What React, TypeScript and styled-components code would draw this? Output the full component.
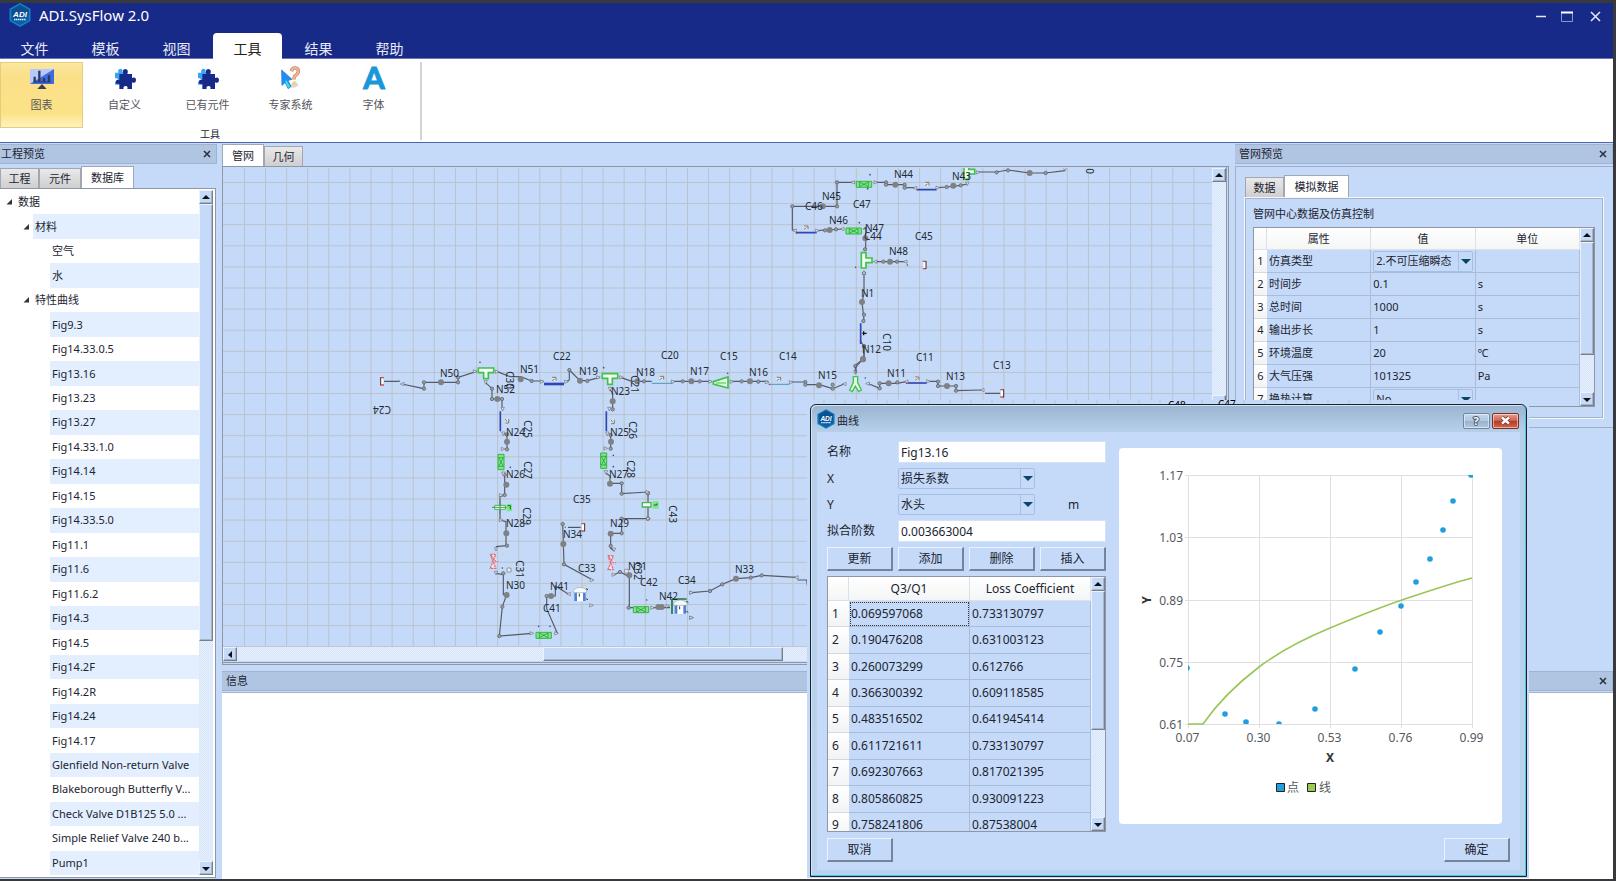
import React from "react";
import styled, { createGlobalStyle, css } from "styled-components";

const font = `"Noto Sans", "Noto Sans CJK SC", sans-serif`;
const c = {
  navy: "#182a87",
  pane: "#c5daf8",
  dock: "#b0c5e2",
  line: "#8f97a5",
  grid: "#a9bcd9",
  text: "#1c2430",
  dark: "#37393c",
};

const GlobalStyle = createGlobalStyle`
  * { box-sizing: border-box; }
  body { margin: 0; background: ${c.dark}; font-family: ${font}; font-size: 11px; line-height: 16px; color: ${c.text}; }
  button, input, select { font: inherit; color: inherit; margin: 0; padding: 0; border: 0; border-radius: 0; background: none; }
  ul, h1, h2, p { margin: 0; padding: 0; list-style: none; font-size: inherit; font-weight: normal; }
  svg { display: block; flex: none; }
`;

const Page = styled.div`
  position: relative;
  display: flex;
  flex-direction: column;
  min-height: 100vh;
  border: solid ${c.dark};
  border-width: 3px 3px 2px 0;
  background: ${c.pane};
`;

/* ---------- title bar and ribbon ---------- */
const Header = styled.header`
  background: ${c.navy};
  color: #fff;
`;
const TitleRow = styled.div`
  display: flex;
  align-items: center;
  height: 30px;
  padding: 0 11px 6px 9px;
  gap: 8px;
`;
const AppTitle = styled.h1`
  flex: 1;
  font-size: 15px;
  line-height: 24px;
`;
const WindowButtons = styled.div`
  display: flex;
  gap: 15px;
  padding-top: 2px;
`;
const MenuRow = styled.nav`
  display: flex;
  gap: 2px;
  height: 26px;
  border-bottom: 1px solid #6a76b4;
`;
const MenuTab = styled.button<{ $active?: boolean }>`
  width: 69px;
  height: 26px;
  padding-top: 5px;
  font-size: 14px;
  line-height: 20px;
  color: #e8ebf7;
  ${(p) => p.$active && css`background: #fff; color: #222; border-radius: 4px 4px 0 0;`}
`;
const Ribbon = styled.div`
  display: flex;
  height: 84px;
  background: #fff;
  border-bottom: 1px solid #5263ad;
`;
const RibbonGroup = styled.section`
  width: 422px;
  margin: 3px 0 2px;
  border-right: 2px solid #d3d3d6;
`;
const RibbonButtons = styled.div`
  display: flex;
`;
const RibbonButton = styled.button<{ $active?: boolean }>`
  display: flex;
  flex-direction: column;
  align-items: center;
  width: 83px;
  height: 66px;
  padding-top: 3px;
  gap: 7px;
  color: #55565a;
  border: 1px solid transparent;
  ${(p) => p.$active && css`
    background: linear-gradient(#fbe7a1, #fbe08a 20%, #fce286 78%, #fff2c0);
    border-color: #e6cd7c;
  `}
`;
const GroupCaption = styled.p`
  font-size: 10px;
  line-height: 12px;
  text-align: center;
`;

/* ---------- docks ---------- */
const Work = styled.main`
  flex: 1;
  display: flex;
  gap: 5px;
  padding-top: 1px;
`;
const LeftDock = styled.aside`
  display: flex;
  flex-direction: column;
  width: 217px;
`;
const Center = styled.div`
  flex: 1;
  min-width: 0;
  display: flex;
  flex-direction: column;
  gap: 6px;
`;
const Upper = styled.div`
  flex: 1;
  display: flex;
  gap: 6px;
  min-height: 0;
`;
const DockTitle = styled.div<{ $pad?: number }>`
  display: flex;
  align-items: center;
  justify-content: space-between;
  height: 20px;
  flex: none;
  padding: 0 5px 0 ${(p) => p.$pad ?? 1}px;
  background: ${c.dock};
  border: 1px solid #a0b4d2;
  border-left-width: 0;
`;
const TabRow = styled.div<{ $pad?: string }>`
  display: flex;
  align-items: flex-end;
  flex: none;
  padding: ${(p) => p.$pad ?? "0"};
`;
const Tab = styled.button<{ $active?: boolean; $w: number }>`
  width: ${(p) => p.$w}px;
  height: ${(p) => (p.$active ? 22 : 20)}px;
  background: ${(p) => (p.$active ? "#fff" : "linear-gradient(#e9e9ea, #dcdcdd 50%, #cfcfd1)")};
  border: 1px solid #a3a8b0;
  border-bottom: 0;
`;
const TreeFrame = styled.div`
  flex: 1;
  display: flex;
  margin: 0 1px 1px 0;
  padding: 1px 2px 2px 0;
  background: #fff;
  border: 1px solid ${c.line};
  border-left: 0;
`;
const Tree = styled.ul`
  flex: 1;
  display: flex;
  flex-direction: column;
  min-width: 0;
`;
const TreeRow = styled.li`
  flex: 1;
  display: flex;
`;
const Twisty = styled.span<{ $level: number }>`
  display: flex;
  flex: none;
  align-items: center;
  justify-content: flex-end;
  width: ${(p) => [16, 33, 50][p.$level]}px;
  padding-right: 4px;
`;
const TreeLabel = styled.span<{ $alt: boolean }>`
  flex: 1;
  display: flex;
  align-items: center;
  padding-left: 2px;
  white-space: nowrap;
  overflow: hidden;
  background: ${(p) => (p.$alt ? "#e3effe" : "#fff")};
`;

/* ---------- scroll bars ---------- */
const Bar = styled.div<{ $horizontal?: boolean }>`
  display: flex;
  flex: none;
  flex-direction: ${(p) => (p.$horizontal ? "row" : "column")};
  ${(p) => (p.$horizontal ? "height" : "width")}: 14px;
  background: repeating-conic-gradient(#d6e5fa 0 25%, #e6effc 0 50%) 0 0 / 2px 2px;
`;
const bevel = css`
  background: ${c.pane};
  border: 1px solid;
  border-color: #e9f2fe #777f8c #777f8c #e9f2fe;
  box-shadow: inset -1px -1px #a9b4c6;
`;
const BarButton = styled.button`
  display: grid;
  place-items: center;
  width: 14px;
  height: 14px;
  flex: none;
  ${bevel}
`;
const BarSpace = styled.span<{ $grow: number }>`
  flex: ${(p) => p.$grow} 1 0;
`;
const Thumb = styled(BarSpace)`
  ${bevel}
`;
const arrows = { up: "M0 5L4 1L8 5Z", down: "M0 2L8 2L4 6Z", left: "M6 0L2 4L6 7Z", right: "M2 0L6 4L2 7Z" };
function Scrollbar({ before = 0, size, after, horizontal }: { before?: number; size: number; after: number; horizontal?: boolean }) {
  const dirs: (keyof typeof arrows)[] = horizontal ? ["left", "right"] : ["up", "down"];
  const button = (d: keyof typeof arrows) => (
    <BarButton aria-label={d}>
      <svg width="8" height="7" viewBox="0 0 8 7"><path d={arrows[d]} fill="#111" /></svg>
    </BarButton>
  );
  return (
    <Bar $horizontal={horizontal}>
      {button(dirs[0])}
      <BarSpace $grow={before} />
      <Thumb $grow={size} />
      <BarSpace $grow={after} />
      {button(dirs[1])}
    </Bar>
  );
}

/* ---------- network canvas ---------- */
const NetworkPane = styled.section`
  flex: 1;
  min-width: 0;
  display: flex;
  flex-direction: column;
`;
const CanvasFrame = styled.div`
  flex: 1;
  display: flex;
  min-height: 0;
  border: 1px solid ${c.line};
  border-right: 3px double ${c.line};
  border-bottom: 3px double ${c.line};
  padding: 1px 0 1px 0;
`;
const CanvasColumn = styled.div`
  flex: 1;
  min-width: 0;
  display: flex;
  flex-direction: column;
`;
const Scene = styled.div`
  flex: 1 1 0;
  min-height: 0;
  overflow: hidden;
`;
const Drawing = styled.svg`
  font-family: ${font};
  font-size: 10px;
  fill: #222a36;
`;

/* ---------- right dock and info ---------- */
const RightDock = styled.aside`
  width: 378px;
`;
const PreviewFrame = styled.div`
  height: 262px;
  margin-top: 2px;
  padding: 8px 9px 8px 8px;
  border: 1px solid #a0b0c8;
  border-width: 1px 0 1px 1px;
`;
const TabPanel = styled.div`
  height: 222px;
  padding: 8px 8px 10px 8px;
  border: 1px solid #f4f8fe;
  outline: 1px solid #a7b3c6;
  outline-offset: -2px;
`;
const PanelCaption = styled.h2`
  padding-bottom: 5px;
`;
const InfoDock = styled.section`
  display: flex;
  flex-direction: column;
  height: 208px;
`;
const InfoBody = styled.div`
  flex: 1;
  margin-top: 1px;
  background: #fff;
  border-top: 1px solid #a7b3c6;
`;

/* ---------- tables ---------- */
const TableBox = styled.div<{ $h: number }>`
  display: flex;
  height: ${(p) => p.$h}px;
  overflow: hidden;
  border: 1px solid ${c.line};
`;
const TableClip = styled.div`
  flex: 1;
  overflow: hidden;
`;
const Table = styled.table`
  width: 100%;
  table-layout: fixed;
  border-collapse: separate;
  border-spacing: 0;
  td, th { padding: 0; font-weight: normal; line-height: 16px; }
  thead th { height: 22px; text-align: center; background: linear-gradient(#fff, #f4f5f6); border: solid #dde0e5; border-width: 0 1px 1px 0; }
  tbody tr { height: 23px; }
  tbody th { background: linear-gradient(#fff, #f2f3f5); border-bottom: 1px solid #d5d8dd; }
  td { border: solid ${c.grid}; border-width: 0 1px 1px 0; padding-left: 2px; }
`;
const CurveTable = styled(Table)`
  height: 262px;
  font-size: 12px;
  thead th { height: 24px; }
  tbody th { text-align: left; padding-left: 4px; }
  tbody tr:first-child td:nth-child(2) { outline: 1px dotted #333; outline-offset: -2px; }
`;
const SelectWrap = styled.span<{ $w: number; $h: number }>`
  position: relative;
  display: block;
  width: ${(p) => p.$w}px;
  height: ${(p) => p.$h}px;
`;
const Select = styled.select`
  appearance: none;
  width: 100%;
  height: 100%;
  padding-left: 2px;
  border: 1px solid #a5c0e6;
  border-radius: 2px;
  background: ${c.pane};
`;
const SelectArrow = styled.span`
  position: absolute;
  inset: 1px 1px 1px auto;
  width: 14px;
  display: grid;
  place-items: center;
  border-left: 1px solid #a5c0e6;
  pointer-events: none;
`;
function DropDown({ id, label, value, w, h }: { id?: string; label?: string; value: string; w: number; h: number }) {
  return (
    <SelectWrap $w={w} $h={h}>
      <Select id={id} aria-label={label}><option>{value}</option></Select>
      <SelectArrow><svg width="10" height="5"><path d="M0 0H10L5 5Z" fill="#0b4468" /></svg></SelectArrow>
    </SelectWrap>
  );
}

/* ---------- dialog ---------- */
const DialogHalo = styled.div`
  position: absolute;
  left: 807px;
  top: 397px;
  width: 722px;
  padding: 4px 2px 1px 3px;
  background: ${c.pane};
`;
const HaloTop = styled.svg`
  position: absolute;
  left: 0;
  top: 0;
  font-family: ${font};
  font-size: 10px;
`;
const Dialog = styled.section`
  border: 1px solid #16242e;
  border-radius: 6px 6px 0 0;
  padding: 0 6px 6px;
  background: linear-gradient(#9ab4d1, #b6cfe9 26px, #b9d2ee);
  box-shadow: inset -1px -1px #53c3dc, inset 1px 1px #d3e4f5;
  font-size: 12px;
`;
const DialogTitle = styled.header`
  display: flex;
  align-items: center;
  gap: 2px;
  height: 27px;
  padding-right: 1px;
  font-size: 11px;
  h2 { flex: 1; padding-top: 5px; }
`;
const CaptionButton = styled.button<{ $close?: boolean }>`
  display: grid;
  place-items: center;
  width: 27px;
  height: 16px;
  margin-top: 4px;
  border: 1px solid ${(p) => (p.$close ? "#7b2d2a" : "#6e86a3")};
  border-radius: 2px;
  box-shadow: inset 0 0 0 1px rgba(255, 255, 255, 0.5);
  background: ${(p) => (p.$close ? "linear-gradient(#e3a092, #d0604c 48%, #bb3820 52%, #cf6a50)" : "linear-gradient(#c4d6ea, #b2c8e0 48%, #98b3d0 52%, #b0c8e2)")};
`;
const DialogBody = styled.div`
  background: ${c.pane};
  padding: 9px 10px 8px;
`;
const Columns = styled.div`
  display: flex;
  gap: 13px;
`;
const Form = styled.div`
  width: 279px;
  display: flex;
  flex-direction: column;
  gap: 5px;
`;
const Field = styled.div`
  display: flex;
  align-items: center;
  label { width: 71px; }
`;
const TextInput = styled.input`
  width: 208px;
  height: 22px;
  padding-left: 2px;
  background: #fff;
  border: 1px solid #d5e2f4;
`;
const Unit = styled.span`
  padding-left: 33px;
`;
const ButtonRow = styled.div`
  display: flex;
  justify-content: space-between;
`;
const PushButton = styled.button`
  width: 66px;
  height: 24px;
  border: solid;
  border-width: 1px 2px 2px 1px;
  border-color: #e9f2fe #75849b #75849b #e9f2fe;
  background: ${c.pane};
`;
const ChartCard = styled.div`
  margin-top: 7px;
  width: 383px;
  height: 376px;
  background: #fff;
  border-radius: 4px;
`;
const ChartSvg = styled.svg`
  font-family: ${font};
  font-size: 12px;
  fill: #55585c;
`;
const Footer = styled(ButtonRow)`
  padding-top: 6px;
`;

/* ---------- icons ---------- */
function Logo({ w, h }: { w: number; h: number }) {
  return (
    <svg width={w} height={h} viewBox="0 0 22 24">
      <path d="M11 .8L20.800 6.200V17.600L11 23.200L1.200 17.600V6.200Z" fill="#0a5fa8" stroke="#1283c8" strokeWidth="1.400" />
      <path d="M11 2L19.500 6.800V12L3 17V6.800Z" fill="#0d4f8e" />
      <text x="11" y="14" fontSize="8" fontWeight="700" fontStyle="italic" textAnchor="middle" fill="#fff" fontFamily="Liberation Sans">ADI</text>
      <path d="M5 16.500H17" stroke="#dff1ff" strokeWidth="1.400" strokeDasharray="1.400 .5" />
    </svg>
  );
}
const BoardIcon = () => (
  <svg width="24" height="24" viewBox="0 0 72 72">
    <path d="M0 9H72V54H0Z" fill="#b8c8fa" />
    <path d="M72 9V54H0Z" fill="#3f6be2" />
    <path d="M14 48V32M28 48V14M42 48V36M57 48V28" stroke="#2d3c5e" strokeWidth="7" />
    <path d="M10 48H62" stroke="#2d3c5e" strokeWidth="3" />
    <path d="M36 54L50 69H22Z" fill="#3a4152" />
  </svg>
);
const PuzzleIcon = () => (
  <svg width="24" height="24" viewBox="-3 -8 72 72">
    <path d="M3 12h10q-3-10 6-12q9 1 6 10h8v38h-30v-9q9 2 10-5q-1-7-10-5z" fill="#3da3f5" />
    <path d="M16 16h12q-5-14 6-15q11 1 6 15h14v12q12-5 12 7q-1 11-12 6v20h-14q3-8-5-9q-9 1-6 9h-13v-16q-10 4-11-5q1-9 11-6z" fill="#182a87" />
  </svg>
);
const HelpIcon = () => (
  <svg width="24" height="24" viewBox="-6 -2 72 74">
    <path d="M20 62q20 8 34-4l-10-14z" fill="#d9d9de" />
    <path d="M31 14Q34 3 44 4Q55 6 52 17Q50 24 42 29Q39 32 39 40" fill="none" stroke="#c98a70" strokeWidth="11" />
    <path d="M31 14Q34 3 44 4Q55 6 52 17Q50 24 42 29Q39 32 39 40" fill="none" stroke="#f3b597" strokeWidth="6" />
    <circle cx="39" cy="52" r="6" fill="#efd56a" />
    <path d="M1 10L33 39L21 43L30 61L21 68L12 49L2 58Z" fill="#1f8ef5" stroke="#2a6db8" strokeWidth="2" />
    <path d="M16 42L27 62L21 66L12 46Z" fill="#35e3f5" />
  </svg>
);
const FontIcon = () => (
  <svg width="24" height="24" viewBox="0 0 24 24" overflow="visible">
    <text x="12" y="23" fontSize="31" textAnchor="middle" fontFamily="Lato" fontWeight="700" fill="#1a97d8" stroke="#1a97d8" strokeWidth="1" strokeLinejoin="round">A</text>
  </svg>
);
const CloseGlyph = () => (
  <svg width="8" height="8"><path d="M1 1L7 7M7 1L1 7" stroke="#2b3340" strokeWidth="1.600" /></svg>
);

/* ---------- data ---------- */
const treeItems: [number, string][] = [
  [0, "数据"], [1, "材料"], [2, "空气"], [2, "水"], [1, "特性曲线"],
  ...["Fig9.3", "Fig14.33.0.5", "Fig13.16", "Fig13.23", "Fig13.27", "Fig14.33.1.0", "Fig14.14", "Fig14.15", "Fig14.33.5.0",
    "Fig11.1", "Fig11.6", "Fig11.6.2", "Fig14.3", "Fig14.5", "Fig14.2F", "Fig14.2R", "Fig14.24", "Fig14.17",
    "Glenfield Non-return Valve", "Blakeborough Butterfly V...", "Check Valve D1B125 5.0 ...", "Simple Relief Valve 240 b...", "Pump1",
  ].map((t) => [2, t] as [number, string]),
];
const properties = [
  ["仿真类型", "2.不可压缩瞬态", ""], ["时间步", "0.1", "s"], ["总时间", "1000", "s"], ["输出步长", "1", "s"],
  ["环境温度", "20", "℃"], ["大气压强", "101325", "Pa"], ["换热计算", "No", ""],
];
const curve = [
  ["0.069597068", "0.733130797"], ["0.190476208", "0.631003123"], ["0.260073299", "0.612766"],
  ["0.366300392", "0.609118585"], ["0.483516502", "0.641945414"], ["0.611721611", "0.733130797"],
  ["0.692307663", "0.817021395"], ["0.805860825", "0.930091223"], ["0.758241806", "0.87538004"],
];

const labels: [string, number, number][] = [
  ["N50", 440, 377], ["C22", 553, 360], ["N51", 520, 373], ["N19", 579, 375], ["C20", 661, 359], ["N18", 636, 376],
  ["N52", 496, 393], ["N23", 611, 395], ["N24", 506, 436], ["N25", 610, 436], ["N26", 506, 478], ["N27", 609, 478],
  ["N28", 506, 527], ["N29", 610, 527], ["N34", 563, 538], ["C35", 573, 503], ["C33", 578, 572], ["N41", 550, 590],
  ["C41", 543, 612], ["N30", 506, 589], ["N31", 628, 570], ["C42", 640, 586], ["N42", 659, 600], ["C34", 678, 584],
  ["C15", 720, 360], ["C14", 779, 360], ["N17", 690, 375], ["N16", 749, 376], ["N15", 818, 379], ["N12", 862, 353],
  ["C11", 916, 361], ["N11", 887, 377], ["N13", 946, 380], ["C13", 993, 369], ["N33", 735, 573],
  ["N44", 894, 178], ["N43", 952, 180], ["N45", 822, 200], ["C46", 805, 210], ["C47", 853, 208], ["N46", 829, 224],
  ["N47", 865, 232], ["C44", 864, 240], ["C45", 915, 240], ["N48", 889, 255], ["N1", 861, 297],
];
const turned: [string, number, number, number][] = [
  ["C30", 510, 380, 90], ["C21", 635, 384, 90], ["C25", 528, 429, 90], ["C26", 633, 430, 90], ["C27", 528, 470, 90],
  ["C28", 631, 469, 90], ["C29", 527, 516, 90], ["C43", 673, 514, 90], ["C31", 520, 569, 90], ["C32", 638, 571, 90],
  ["C10", 887, 342, 90], ["0", 1090, 171, 90], ["C24", 382, 410, 180],
];

/* Parts of the network are drawn in groups whose unit is a third of a pixel. */
type Pts = number[][];
const Nodes = ({ at, r = 9 }: { at: Pts; r?: number }) => <>{at.map(([x, y], i) => <circle key={i} cx={x} cy={y} r={r} fill="#808184" />)}</>;
const Joints = ({ at }: { at: Pts }) => (
  <>{at.map(([x, y], i) => <circle key={i} cx={x} cy={y} r="5" fill="#9a9ea6" stroke="#63676f" strokeWidth="2.500" />)}</>
);
const Ports = ({ at }: { at: Pts }) => (
  <>{at.map(([x, y, a = 0], i) => <path key={i} d="M-6 -5L5 0L-6 5Z" transform={`translate(${x} ${y}) rotate(${a})`} fill="#dbe6f7" stroke="#6d7178" strokeWidth="2" />)}</>
);
const Wires = ({ d }: { d: string }) => <path d={d} fill="none" stroke="#555b66" strokeWidth="3.500" />;
const Pipes = ({ d, color = "#2f46b5", w = 5 }: { d: string; color?: string; w?: number }) => <path d={d} fill="none" stroke={color} strokeWidth={w} />;
const Valve = ({ x, y, turn = 0 }: { x: number; y: number; turn?: number }) => (
  <g transform={`translate(${x} ${y}) rotate(${turn})`}>
    <path d="M-23 -9H23V9H-23Z" fill="#7fe58a" stroke="#31b93e" strokeWidth="3" />
    <path d="M-13 -7L13 7V-7L-13 7Z" fill="none" stroke="#1e8b2a" strokeWidth="2" />
  </g>
);
const Tee = ({ x, y, turn = 0 }: { x: number; y: number; turn?: number }) => (
  <path transform={`translate(${x} ${y}) rotate(${turn})`} d="M-23 -14H23V0H7V18H-7V0H-23Z" fill="#f6fff4" stroke="#3fc14a" strokeWidth="5" />
);
const Bracket = ({ x, y, flip }: { x: number; y: number; flip?: boolean }) => (
  <g transform={`translate(${x} ${y}) scale(${flip ? -1 : 1} 1)`}>
    <path d="M-4 -11H4V11H-4Z" fill="#fff" /><path d="M-6 -11H4M-6 11H4" stroke="#d8503c" strokeWidth="4" /><path d="M4 -12V12" stroke="#442a2a" strokeWidth="3" />
  </g>
);
const Mark = ({ x, y, turn = 0 }: { x: number; y: number; turn?: number }) => (
  <g transform={`translate(${x} ${y}) rotate(${turn})`}><path d="M-7 -6H7V6H-7Z" fill="#eceae6" /><path d="M-6 -5H6V5M-6 5L2 0" stroke="#6a625c" strokeWidth="2.500" fill="none" /></g>
);
const RedValve = ({ x, y }: { x: number; y: number }) => (
  <g transform={`translate(${x} ${y})`}><path d="M-8 -21H8L-8 21H8L-8 -21L8 0H16" fill="#fbeaf0" stroke="#e0717a" strokeWidth="4" strokeDasharray="7 2" /></g>
);
const Tank = ({ x, y }: { x: number; y: number }) => (
  <g transform={`translate(${x} ${y})`}>
    <path d="M-17 -8H17V19H-17Z" fill="#4f80d6" /><path d="M-9 -8H9V20H-9Z" fill="#fff" /><path d="M-20 -14Q0 -30 20 -14V-6H-20Z" fill="#f4f7fb" stroke="#9aa7b8" strokeWidth="2" />
    <path d="M-2 -3V6M18 -18L24 -15M18 12L24 15" stroke="#333" strokeWidth="3" />
  </g>
);
const Specks = ({ at, color }: { at: Pts; color: string }) => <>{at.map(([x, y], i) => <circle key={i} cx={x} cy={y} r="2.500" fill={color} />)}</>;

function Network() {
  const rows = Array.from({ length: 38 }, (_, i) => 182.5 + i * 21.1);
  const cols = Array.from({ length: 62 }, (_, i) => 244.4 + i * 21.1);
  const third = 1 / 3;
  return (
    <Drawing width="1300" height="800" viewBox="223 168 1300 800" role="img" aria-label="管网">
      <path d={cols.map((x) => `M${x} 167V968`).join("") + rows.map((y) => `M223 ${y}H1523`).join("")} stroke="#bac2cd" strokeWidth="1" />
      <g transform={`translate(370 340) scale(${third})`}>
        <Wires d="M42 124H88M96 132L162 146V127H264V112L320 94M382 95L420 110H452L485 123H520M588 125L598 120V90L630 122H652L690 112M752 112L785 124H845" />
        <Wires d="M347 128L366 146V177H396V208M402 280L411 290V325M404 408V465L390 470V540L408 545V617L378 620M378 700L400 704V764H410L397 800L388 888L486 880M562 880L530 806V768H556V738L595 762" />
        <Wires d="M720 148L728 160V208M718 282L722 290V326M708 400L720 408V430H755V461L834 456V536H755V580H722V625L732 632M732 704L750 696L770 706H778V803H790M845 803H900M578 552L582 673L668 720" />
        <Pipes d="M522 132H582" w={8} /><Pipes d="M391 214V274M709 214V274" /><Pipes d="M845 130H908" color="#4a9bb5" w={3} />
        <Joints at={[[162, 146], [162, 127], [264, 127], [264, 112], [485, 123], [598, 90], [652, 123], [822, 124], [366, 146], [366, 177], [396, 177], [411, 328], [404, 404], [404, 465], [411, 617], [400, 700], [397, 800], [388, 888], [530, 768], [728, 208], [722, 326], [755, 430], [755, 461], [834, 460], [834, 536], [755, 536], [755, 580], [722, 618], [750, 696], [776, 803], [578, 552], [582, 673], [452, 118], [722, 285], [411, 283]]} />
        <Ports at={[[96, 132, 180], [316, 94], [382, 95], [347, 128, 90], [517, 125], [590, 125], [686, 112], [755, 112], [720, 148, 90], [398, 208, 90], [718, 208, 90], [400, 282, 90], [712, 282, 90], [400, 327], [708, 325], [400, 402, 90], [708, 398, 90], [394, 466], [394, 540], [378, 628, 90], [378, 700, 90], [732, 630, 90], [732, 704], [486, 880], [560, 880], [595, 762, 180], [667, 720], [665, 796], [848, 803], [894, 798], [965, 758], [965, 833], [834, 456], [836, 536]]} />
        <Nodes at={[[213, 127], [452, 118], [630, 122], [802, 124], [382, 177], [728, 184], [411, 305], [723, 305], [409, 434], [720, 431], [409, 580], [722, 581], [410, 765], [543, 768], [580, 612], [778, 706], [875, 801], [865, 801]]} />
        <Tee x={348} y={98} /><Tee x={720} y={115} />
        <Valve x={393} y={366} turn={90} /><Valve x={701} y={362} turn={90} /><Valve x={521} y={886} /><Valve x={813} y={809} />
        <path d="M374 496H406V508H374Z" fill="#fff" stroke="#43b94d" strokeWidth="3" /><path d="M366 502H414M390 482V522" stroke="#4b9454" strokeWidth="3" />
        <path d="M410 492H426V514H410ZM848 484H866V506H848Z" fill="#7fe58a" /><path d="M413 497H421V508M851 495H861V490" stroke="#176b22" strokeWidth="3" fill="none" />
        <path d="M817 488H843V501H817Z" fill="#fff" stroke="#43b94d" strokeWidth="4" />
        <RedValve x={369} y={664} /><RedValve x={722} y={668} />
        <path d="M411 684H423V696H411ZM764 688H775V699H764Z" fill="#e4ecf8" stroke="#777" strokeWidth="2" />
        <Tank x={630} y={764} /><Tank x={931} y={802} /><path d="M906 776V822M906 777H950" stroke="#1c7a3a" strokeWidth="5" />
        <Bracket x={36} y={124} flip /><Bracket x={640} y={562} /><Pipes d="M594 562H632" color="#333b4a" w={3} />
        <Mark x={552} y={117} /><Mark x={411} y={243} turn={90} /><Mark x={728} y={245} turn={90} /><Mark x={875} y={114} />
        <Specks color="#d8dc5c" at={[[77, 156], [600, 531], [425, 350], [398, 643], [748, 648], [797, 780], [645, 736], [640, 737]]} />
        <Specks color="#3aa06a" at={[[88, 123], [586, 562]]} /><Specks color="#444c80" at={[[330, 67], [701, 83], [730, 346], [421, 382], [730, 380], [506, 859], [540, 859], [830, 780], [397, 684]]} />
      </g>
      <g transform={`translate(660 340) scale(${third})`}>
        <Wires d="M40 124H155M210 124H325M392 126H436V134H478L518 146L552 132M622 130L659 145V130H712L738 125M803 124H834V138H888V152L965 150M975 160H1020M95 758L150 753L187 733L228 716L272 713L305 706L408 712M412 720H440L444 750M600 0L612 20V55L586 76V98" />
        <Pipes d="M330 133H388" color="#4a9bb5" w={3} /><Pipes d="M742 129H800" />
        <Joints at={[[68, 124], [119, 124], [245, 124], [295, 125], [436, 126], [436, 134], [518, 134], [518, 146], [659, 145], [659, 130], [712, 127], [834, 125], [834, 138], [888, 138], [888, 152], [150, 753], [187, 733], [272, 713], [305, 706], [612, 20], [586, 78]]} />
        <Ports at={[[40, 125], [152, 125], [216, 125], [322, 127], [394, 127], [552, 132, 180], [622, 131, 180], [738, 125, 180], [806, 124], [966, 150, 180], [95, 758], [95, 833], [408, 712, 180], [586, 98, 90]]} />
        <Nodes at={[[94, 124], [270, 124], [477, 136], [686, 130], [861, 138], [228, 716], [609, 58]]} />
        <path d="M160 125L204 111V144L160 132Z" fill="#e4fbe6" stroke="#3fc14a" strokeWidth="5" /><path d="M168 129H198" stroke="#3fc14a" strokeWidth="3" />
        <path d="M580 110H593V128L604 150L596 155L586 138L577 155L569 150L580 128Z" fill="#e4fbe6" stroke="#3fc14a" strokeWidth="4" />
        <Bracket x={1027} y={160} /><Mark x={356} y={117} /><Mark x={771} y={116} />
        <Specks color="#d8dc5c" at={[[988, 128], [430, 688]]} /><Specks color="#c33" at={[[328, 133], [740, 130]]} /><Specks color="#444c80" at={[[203, 100], [616, 114]]} />
      </g>
      <g transform={`translate(760 140) scale(${third})`}>
        <Wires d="M285 127H231V199H97V270H105M345 127H378V134H434V143H468M532 143L560 141L602 136L622 132M655 96H710L744 90L809 99H857L915 92M170 272L250 267M310 268L317 262V330M345 365H435M312 398V460L306 486L312 540M312 615V655L288 680V700" />
        <Pipes d="M108 278H170M472 149H530M302 550V612" />
        <Joints at={[[231, 127], [231, 199], [97, 199], [378, 127], [378, 134], [434, 134], [434, 143], [560, 141], [602, 136], [710, 97], [744, 91], [857, 99], [195, 271], [228, 268], [315, 328], [370, 365], [411, 365], [312, 400], [312, 524], [310, 543], [312, 618]]} />
        <Ports at={[[278, 127, 180], [348, 127], [464, 144, 180], [534, 143], [622, 132, 90], [655, 97], [915, 88, 90], [103, 272, 180], [173, 272], [246, 267, 180], [345, 365, 180], [435, 365, 180], [312, 397, 270]]} />
        <Nodes at={[[406, 134], [580, 137], [809, 99], [188, 199], [209, 270], [316, 295], [390, 365], [306, 486], [309, 658]]} />
        <Valve x={312} y={133} /><Valve x={281} y={273} /><Tee x={318} y={361} turn={-90} /><Tee x={626} y={95} turn={-90} />
        <Bracket x={494} y={375} /><Mark x={501} y={132} /><Mark x={138} y={263} /><path d="M307 580H320M311 574V586" stroke="#111" strokeWidth="4" />
        <Specks color="#d8dc5c" at={[[296, 104], [455, 343]]} /><Specks color="#444c80" at={[[330, 104], [298, 248], [442, 375], [287, 382], [323, 146]]} /><Specks color="#c33" at={[[472, 150], [109, 279]]} />
      </g>
      {labels.map(([t, x, y]) => <text key={t} x={x} y={y}>{t}</text>)}
      {turned.map(([t, x, y, a]) => <text key={t} textAnchor="middle" dy="4" transform={`translate(${x} ${y}) rotate(${a})`}>{t}</text>)}
    </Drawing>
  );
}

const dots = [[334, 53], [324, 82], [311, 111], [297, 134], [282, 158], [261, 184], [236, 221], [196, 261], [160, 276], [127, 274], [106, 266], [68, 220], [352, 27]];
function CurveChart() {
  const xs = [69.5, 140.5, 211.5, 282.5, 353.5];
  const ys = [27.5, 89.5, 152.5, 214.5, 276.5];
  return (
    <ChartSvg width="383" height="376" viewBox="0 0 383 376" role="img" aria-label="曲线">
      <defs><clipPath id="plot"><path d="M69 27H354V276H69Z" /></clipPath></defs>
      <path d={xs.map((x) => `M${x} 27V280`).join("") + ys.map((y) => `M66 ${y}H354`).join("")} stroke="#dfdfe1" />
      {["1.17", "1.03", "0.89", "0.75", "0.61"].map((t, i) => <text key={t} x="64" y={ys[i] + 4.5} textAnchor="end">{t}</text>)}
      {["0.07", "0.30", "0.53", "0.76", "0.99"].map((t, i) => <text key={t} x={xs[i] - 1} y="294" textAnchor="middle">{t}</text>)}
      <text x="211" y="314" textAnchor="middle" fontWeight="700" fill="#333">X</text>
      <text textAnchor="middle" fontWeight="700" fill="#333" transform="translate(32 152) rotate(-90)">Y</text>
      <path d="M69 276H84C100 253 119 235 140 219S187 190 211 180S259 160 283 152S330 136 353 130" fill="none" stroke="#99c556" strokeWidth="1.600" />
      <g clipPath="url(#plot)" fill="#209fdf">{dots.map(([x, y]) => <circle key={x} cx={x} cy={y} r="2.800" />)}</g>
      <path d="M157.500 335.500H165.500V343.500H157.500Z" fill="#209fdf" stroke="#222" /><text x="168" y="344">点</text>
      <path d="M188.500 335.500H196.500V343.500H188.500Z" fill="#99ca53" stroke="#222" /><text x="200" y="344">线</text>
    </ChartSvg>
  );
}

const ribbonItems: [string, () => React.ReactElement][] = [
  ["图表", BoardIcon], ["自定义", PuzzleIcon], ["已有元件", PuzzleIcon], ["专家系统", HelpIcon], ["字体", FontIcon],
];

export default function App() {
  return (
    <Page>
      <GlobalStyle />
      <Header>
        <TitleRow>
          <Logo w={22} h={24} />
          <AppTitle>ADI.SysFlow 2.0</AppTitle>
          <WindowButtons>
            <button aria-label="最小化"><svg width="10" height="11"><path d="M0 5.500H10" stroke="#e6e9f7" strokeWidth="1.500" /></svg></button>
            <button aria-label="最大化"><svg width="12" height="11"><path d="M.5 1V10.500H11.500V1" fill="none" stroke="#8c96c8" /><path d="M0 1.500H12" stroke="#fff" strokeWidth="2" /></svg></button>
            <button aria-label="关闭"><svg width="14" height="11"><path d="M3 1L12 10M12 1L3 10" stroke="#e6e9f7" strokeWidth="1.500" /></svg></button>
          </WindowButtons>
        </TitleRow>
        <MenuRow>
          {["文件", "模板", "视图", "工具", "结果", "帮助"].map((t) => <MenuTab key={t} $active={t === "工具"}>{t}</MenuTab>)}
        </MenuRow>
      </Header>
      <Ribbon>
        <RibbonGroup>
          <RibbonButtons>
            {ribbonItems.map(([t, Icon], i) => <RibbonButton key={t} $active={i === 0}><Icon />{t}</RibbonButton>)}
          </RibbonButtons>
          <GroupCaption>工具</GroupCaption>
        </RibbonGroup>
      </Ribbon>

      <Work>
        <LeftDock>
          <DockTitle><h2>工程预览</h2><button aria-label="关闭"><CloseGlyph /></button></DockTitle>
          <TabRow $pad="2px 0 0"><Tab $w={39}>工程</Tab><Tab $w={42}>元件</Tab><Tab $w={53} $active>数据库</Tab></TabRow>
          <TreeFrame>
            <Tree>
              {treeItems.map(([level, t], i) => (
                <TreeRow key={t}>
                  <Twisty $level={level}>{(i === 0 || level === 1) && <svg width="6" height="6"><path d="M6 0V5.500H.5Z" fill="#333" /></svg>}</Twisty>
                  <TreeLabel $alt={i % 2 === 1}>{t}</TreeLabel>
                </TreeRow>
              ))}
            </Tree>
            <Scrollbar size={435} after={220} />
          </TreeFrame>
        </LeftDock>

        <Center>
          <Upper>
            <NetworkPane>
              <TabRow><Tab $w={42} $active>管网</Tab><Tab $w={39}>几何</Tab></TabRow>
              <CanvasFrame>
                <CanvasColumn>
                  <Scene><Network /></Scene>
                  <Scrollbar horizontal before={307} size={239} after={416} />
                </CanvasColumn>
                <Scrollbar before={215} size={163} after={90} />
              </CanvasFrame>
            </NetworkPane>
            <RightDock>
              <DockTitle $pad={4}><h2>管网预览</h2><button aria-label="关闭"><CloseGlyph /></button></DockTitle>
              <PreviewFrame>
                <TabRow $pad="0 0 0 1px"><Tab $w={39}>数据</Tab><Tab $w={65} $active>模拟数据</Tab></TabRow>
                <TabPanel>
                  <PanelCaption>管网中心数据及仿真控制</PanelCaption>
                  <TableBox $h={180}>
                    <TableClip>
                      <Table>
                        <colgroup><col width="13" /><col /><col /><col /></colgroup>
                        <thead><tr><th /><th>属性</th><th>值</th><th>单位</th></tr></thead>
                        <tbody>
                          {properties.map(([name, value, unit], i) => (
                            <tr key={name}>
                              <th>{i + 1}</th><td>{name}</td>
                              <td>{unit ? value : <DropDown label={name} value={value} w={100} h={21} />}</td>
                              <td>{unit}</td>
                            </tr>
                          ))}
                        </tbody>
                      </Table>
                    </TableClip>
                    <Scrollbar size={113} after={38} />
                  </TableBox>
                </TabPanel>
              </PreviewFrame>
            </RightDock>
          </Upper>
          <InfoDock>
            <DockTitle $pad={4}><h2>信息</h2><button aria-label="关闭"><CloseGlyph /></button></DockTitle>
            <InfoBody />
          </InfoDock>
        </Center>
      </Work>

      <DialogHalo>
        <HaloTop width="722" height="5" aria-hidden="true">
          <path d={Array.from({ length: 28 }, (_, i) => `M${17 + i * 21} 0V4`).join("")} stroke="#bac2cd" />
          <text x="361" y="9">C48</text><text x="411" y="8">C47</text>
        </HaloTop>
        <Dialog role="dialog" aria-label="曲线">
          <DialogTitle>
            <Logo w={18} h={20} />
            <h2>曲线</h2>
            <CaptionButton aria-label="帮助"><svg width="9" height="12"><text x="4" y="10" fontSize="11" fontWeight="700" textAnchor="middle" fill="#fff" stroke="#4d5c70" strokeWidth="2" paintOrder="stroke">?</text></svg></CaptionButton>
            <CaptionButton $close aria-label="关闭"><svg width="11" height="9"><path d="M2 1.500L9 7.500M9 1.500L2 7.500" stroke="#6d3a3a" strokeWidth="4" /><path d="M2 1.500L9 7.500M9 1.500L2 7.500" stroke="#fff" strokeWidth="2.400" /></svg></CaptionButton>
          </DialogTitle>
          <DialogBody>
            <Columns>
              <Form>
                <Field><label htmlFor="name">名称</label><TextInput id="name" defaultValue="Fig13.16" /></Field>
                <Field><label htmlFor="x">X</label><DropDown id="x" value="损失系数" w={137} h={21} /></Field>
                <Field><label htmlFor="y">Y</label><DropDown id="y" value="水头" w={137} h={21} /><Unit>m</Unit></Field>
                <Field><label htmlFor="order">拟合阶数</label><TextInput id="order" defaultValue="0.003663004" /></Field>
                <ButtonRow>{["更新", "添加", "删除", "插入"].map((t) => <PushButton key={t}>{t}</PushButton>)}</ButtonRow>
                <TableBox $h={256}>
                  <TableClip>
                    <CurveTable>
                      <colgroup><col width="21" /><col /><col /></colgroup>
                      <thead><tr><th /><th>Q3/Q1</th><th>Loss Coefficient</th></tr></thead>
                      <tbody>{curve.map(([a, b], i) => <tr key={a}><th>{i + 1}</th><td>{a}</td><td>{b}</td></tr>)}</tbody>
                    </CurveTable>
                  </TableClip>
                  <Scrollbar size={138} after={87} />
                </TableBox>
              </Form>
              <ChartCard><CurveChart /></ChartCard>
            </Columns>
            <Footer><PushButton>取消</PushButton><PushButton>确定</PushButton></Footer>
          </DialogBody>
        </Dialog>
      </DialogHalo>
    </Page>
  );
}
